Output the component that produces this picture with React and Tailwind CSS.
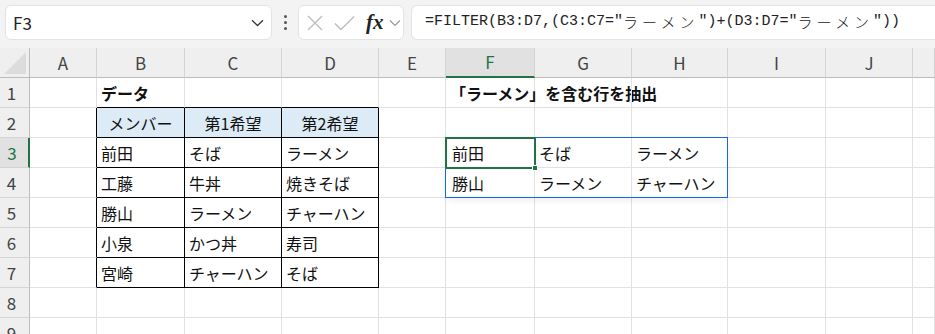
import React from "react";

const COLS = ["A", "B", "C", "D", "E", "F", "G", "H", "I", "J", ""];

const DATA = {
  "1-B": { t: "データ", bold: true },
  "1-F": { t: "「ラーメン」を含む行を抽出", bold: true },
  "2-B": { t: "メンバー", center: true },
  "2-C": { t: "第1希望", center: true },
  "2-D": { t: "第2希望", center: true },
  "3-B": { t: "前田" },
  "3-C": { t: "そば" },
  "3-D": { t: "ラーメン" },
  "4-B": { t: "工藤" },
  "4-C": { t: "牛丼" },
  "4-D": { t: "焼きそば" },
  "5-B": { t: "勝山" },
  "5-C": { t: "ラーメン" },
  "5-D": { t: "チャーハン" },
  "6-B": { t: "小泉" },
  "6-C": { t: "かつ丼" },
  "6-D": { t: "寿司" },
  "7-B": { t: "宮崎" },
  "7-C": { t: "チャーハン" },
  "7-D": { t: "そば" },
  "3-F": { t: "前田", pad: true },
  "3-G": { t: "そば" },
  "3-H": { t: "ラーメン" },
  "4-F": { t: "勝山", pad: true },
  "4-G": { t: "ラーメン" },
  "4-H": { t: "チャーハン" },
};

const inTable = (r, ci) => r >= 2 && r <= 7 && ci >= 1 && ci <= 3;

function Cell({ r, ci }) {
  const col = COLS[ci];
  const d = DATA[`${r}-${col}`];
  const rightBlack = inTable(r, ci) || inTable(r, ci + 1);
  const bottomBlack = inTable(r, ci) || inTable(r + 1, ci);
  const headerFill = r === 2 && ci >= 1 && ci <= 3;
  return (
    <div
      className={[
        "flex items-center border-r border-b whitespace-nowrap text-[16px] leading-[20px] text-[#111]",
        rightBlack ? "border-r-black" : "border-r-[#e1e1e1]",
        bottomBlack ? "border-b-black" : "border-b-[#e1e1e1]",
        headerFill ? "bg-[#ddebf7]" : "",
        d && d.center ? "justify-center" : d && d.pad ? "pl-[6px]" : "pl-[4px]",
        d && d.bold ? "font-bold" : "",
      ].join(" ")}
    >
      {d ? d.t : null}
    </div>
  );
}

function Toolbar() {
  return (
    <div className="flex items-start h-[48px] bg-[#f3f3f3] pt-[5px] pl-[5px]">
      <div className="flex items-center w-[267px] h-[35px] bg-white border border-[#e3e3e3] rounded-[6px] pl-[7px] pr-[6px]">
        <span className="text-[17px] text-[#222] flex-1">F3</span>
        <svg width="13" height="8" viewBox="0 0 13 8" className="mr-[1px]">
          <path d="M1 1.2 L6.5 6.5 L12 1.2" fill="none" stroke="#333" strokeWidth="1.3" />
        </svg>
      </div>
      <div className="w-[26px] h-[35px] flex flex-col items-center justify-center gap-[3px]">
        <div className="w-[3px] h-[3px] rounded-full bg-[#555]" />
        <div className="w-[3px] h-[3px] rounded-full bg-[#555]" />
        <div className="w-[3px] h-[3px] rounded-full bg-[#555]" />
      </div>
      <div className="flex items-center w-[106px] h-[35px] bg-white border border-[#e3e3e3] rounded-[6px] pl-[8px]">
        <svg width="16" height="16" viewBox="0 0 16 16">
          <path d="M1 1 L15 15 M15 1 L1 15" stroke="#bdbdbd" strokeWidth="1.4" fill="none" />
        </svg>
        <svg width="21" height="16" viewBox="0 0 21 16" className="ml-[11px]">
          <path d="M1 8.5 L7 14.5 L20 1.5" stroke="#bdbdbd" strokeWidth="1.4" fill="none" />
        </svg>
        <span className="ml-[11px] text-[21px] leading-none italic font-bold text-[#222] [font-family:'Liberation_Serif',serif]">
          fx
        </span>
        <svg width="12" height="8" viewBox="0 0 12 8" className="ml-[5px]">
          <path d="M1 1.5 L6 6.5 L11 1.5" fill="none" stroke="#999" strokeWidth="1.2" />
        </svg>
      </div>
      <div className="flex items-center flex-1 ml-[7px] h-[35px] bg-white border border-r-0 border-[#e3e3e3] rounded-l-[6px] pl-[13px] whitespace-nowrap text-[15px] text-[#222] [font-family:'Liberation_Mono','Noto_Sans_CJK_JP',monospace]">
        =FILTER(B3:D7,(C3:C7="
        <span className="tracking-[4px] [font-family:'Noto_Sans_CJK_JP',sans-serif] font-light">ラーメン</span>
        ")+(D3:D7="
        <span className="tracking-[4px] [font-family:'Noto_Sans_CJK_JP',sans-serif] font-light">ラーメン</span>
        "))
      </div>
    </div>
  );
}

export default function App() {
  const rows = [1, 2, 3, 4, 5, 6, 7, 8, 9];
  return (
    <div className="w-[935px] h-[334px] overflow-hidden bg-white [font-family:'Noto_Sans_CJK_JP',sans-serif]">
      <Toolbar />
      <div className="relative grid grid-cols-[30px_67px_88px_97px_97px_67px_89px_97px_96px_98px_87px_1fr] grid-rows-[repeat(10,30px)]">
        <div className="relative bg-[#efefef] border-r border-b border-r-[#bcbcbc] border-b-[#bcbcbc]">
          <div className="absolute right-[3px] bottom-[3px] w-0 h-0 border-l-[22px] border-l-transparent border-b-[22px] border-b-[#dcdcdc]" />
        </div>
        {COLS.map((c, i) => (
          <div
            key={c + i}
            className={
              c === "F"
                ? "flex items-center justify-center bg-[#e1e1e1] border-r border-r-[#d4d4d4] border-b-2 border-b-[#217346] text-[17px] text-[#217346]"
                : "flex items-center justify-center bg-[#efefef] border-r border-r-[#d4d4d4] border-b border-b-[#bcbcbc] text-[17px] text-[#444]"
            }
          >
            {c}
          </div>
        ))}
        {rows.map((r) => (
          <React.Fragment key={r}>
            <div
              className={
                r === 3
                  ? "flex items-center justify-center pr-[4px] bg-[#e1e1e1] border-r-2 border-r-[#217346] border-b border-b-[#d4d4d4] text-[17px] text-[#217346]"
                  : "flex items-center justify-center pr-[6px] bg-[#efefef] border-r border-r-[#bcbcbc] border-b border-b-[#d4d4d4] text-[17px] text-[#444]"
              }
            >
              {r}
            </div>
            {COLS.map((c, ci) => (
              <Cell key={c + ci} r={r} ci={ci} />
            ))}
          </React.Fragment>
        ))}
        {/* spill range outline */}
        <div className="absolute z-10 col-start-7 col-end-10 row-start-4 row-end-6 top-0 left-0 right-px bottom-px outline outline-1 outline-solid outline-[#1565e8] shadow-[0_3px_8px_rgba(0,0,0,0.08)] pointer-events-none" />
        {/* active cell */}
        <div className="absolute z-20 col-start-7 col-end-8 row-start-4 row-end-5 -top-px -left-px right-[-1px] bottom-[-1px] border-2 border-solid border-[#217346] pointer-events-none">
          <div className="absolute right-[-4px] bottom-[-4px] w-[6px] h-[6px] bg-[#217346] border border-white" />
        </div>
      </div>
    </div>
  );
}
